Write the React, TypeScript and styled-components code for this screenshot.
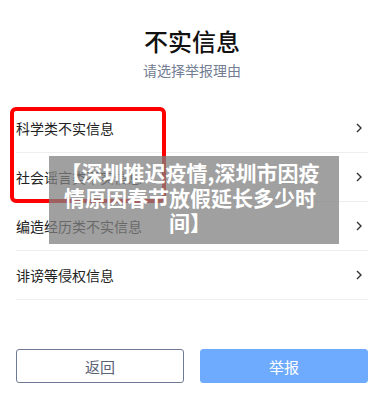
import React from "react";
import styled, { createGlobalStyle } from "styled-components";

const GlobalStyle = createGlobalStyle`
  html, body {
    margin: 0;
    padding: 0;
    background: #ffffff;
    font-family: "Noto Sans CJK SC", "Noto Sans", sans-serif;
  }
`;

const Page = styled.div`
  position: relative;
  width: 389px;
  height: 402px;
  overflow: hidden;
  background: #ffffff;
  padding: 0 21px 0 16px;
  box-sizing: border-box;
  display: flex;
  flex-direction: column;
`;

const Header = styled.header`
  display: flex;
  flex-direction: column;
  align-items: center;
  padding-top: 25px;
`;

const Title = styled.h1`
  margin: 0;
  font-size: 24px;
  line-height: 32px;
  font-weight: 500;
  color: #111111;
`;

const Subtitle = styled.p`
  margin: 3px 0 0;
  font-size: 14px;
  line-height: 20px;
  color: #737d93;
`;

const List = styled.ul`
  list-style: none;
  margin: 24px 0 0;
  padding: 0;
`;

const Row = styled.li`
  height: 48px;
  border-bottom: 1px solid #eeeeee;
  display: flex;
  align-items: center;
  justify-content: space-between;
  padding-right: 6px;
  font-size: 14px;
  color: #222222;
`;

const Chevron = () => (
  <svg width="6" height="10" viewBox="0 0 6 10" fill="none">
    <polyline points="1,1 5,5 1,9" stroke="#333" strokeWidth="1.4" />
  </svg>
);

const Actions = styled.div`
  display: flex;
  gap: 16px;
  margin-top: 49px;
`;

const Button = styled.button<{ $primary?: boolean }>`
  flex: 1;
  height: 34px;
  border-radius: 3px;
  font-family: inherit;
  font-size: 15px;
  border: 1px solid ${(p) => (p.$primary ? "#6eabff" : "#6f7b96")};
  background: ${(p) => (p.$primary ? "#6eabff" : "#ffffff")};
  color: ${(p) => (p.$primary ? "#ffffff" : "#5a6275")};
  padding: 0;
`;

const Highlight = styled.div`
  position: absolute;
  left: 10px;
  top: 107px;
  width: 156px;
  height: 96px;
  box-sizing: border-box;
  border: 4px solid #ff0000;
  border-radius: 6px;
  pointer-events: none;
`;

const Caption = styled.div`
  position: absolute;
  left: 49px;
  top: 156px;
  width: 290px;
  height: 88px;
  box-sizing: border-box;
  padding: 4px 16px 0 8px;
  background: rgba(128, 128, 128, 0.75);
  color: #ffffff;
  font-size: 21px;
  line-height: 25px;
  font-weight: 700;
  text-align: center;
`;

const items = ["科学类不实信息", "社会谣言类不实信息", "编造经历类不实信息", "诽谤等侵权信息"];

export default function App() {
  return (
    <>
      <GlobalStyle />
      <Page>
        <Header>
          <Title>不实信息</Title>
          <Subtitle>请选择举报理由</Subtitle>
        </Header>
        <List>
          {items.map((t) => (
            <Row key={t}>
              <span>{t}</span>
              <Chevron />
            </Row>
          ))}
        </List>
        <Actions>
          <Button>返回</Button>
          <Button $primary>举报</Button>
        </Actions>
        <Highlight />
        <Caption>【深圳推迟疫情,深圳市因疫情原因春节放假延长多少时间】</Caption>
      </Page>
    </>
  );
}
